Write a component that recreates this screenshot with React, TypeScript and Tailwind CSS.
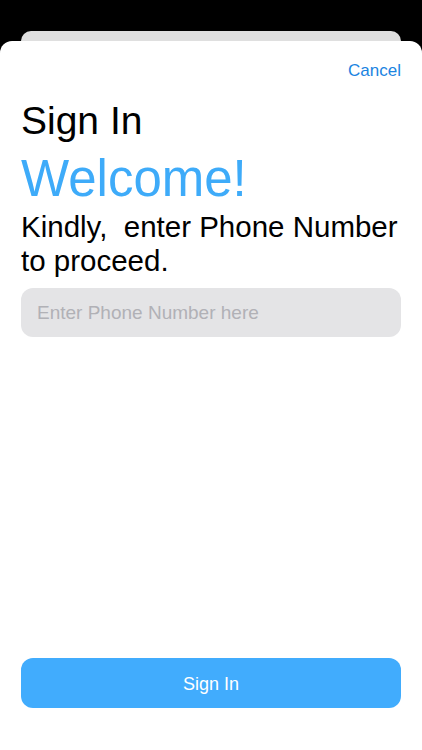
import React from 'react';

export default function App() {
  return (
    <div
      className="h-[750px] w-full bg-black flex flex-col"
      style={{ fontFamily: '"Liberation Sans", Arial, sans-serif' }}
    >
      <div className="pt-[31px] px-[21px]">
        <div className="h-[10px] rounded-t-[10px] bg-[#dfdfdf]" />
      </div>
      <div className="flex-1 flex flex-col bg-white rounded-t-[12px] px-[21px]">
        <div className="flex justify-end pt-[20px]">
          <button className="text-[17px] leading-[20px] text-[#1b84e1]">Cancel</button>
        </div>
        <h1 className="mt-[18px] text-[39px] leading-[44px] text-black">Sign In</h1>
        <h2 className="mt-[8px] text-[51px] leading-[56px] text-[#3eabf9]">Welcome!</h2>
        <p className="mt-[3px] text-[29.5px] leading-[34px] text-black whitespace-pre-wrap">
          {'Kindly,  enter Phone Number to proceed.'}
        </p>
        <input
          type="tel"
          placeholder="Enter Phone Number here"
          className="mt-[10px] h-[49px] w-full rounded-[12px] bg-[#e4e4e6] px-[16px] text-[19px] text-black placeholder:text-[#b1b1b6] outline-none"
        />
        <button className="mt-auto mb-[42px] h-[50px] w-full rounded-[12px] bg-[#41acfd] pt-[3px] text-[18px] text-white">
          Sign In
        </button>
      </div>
    </div>
  );
}
